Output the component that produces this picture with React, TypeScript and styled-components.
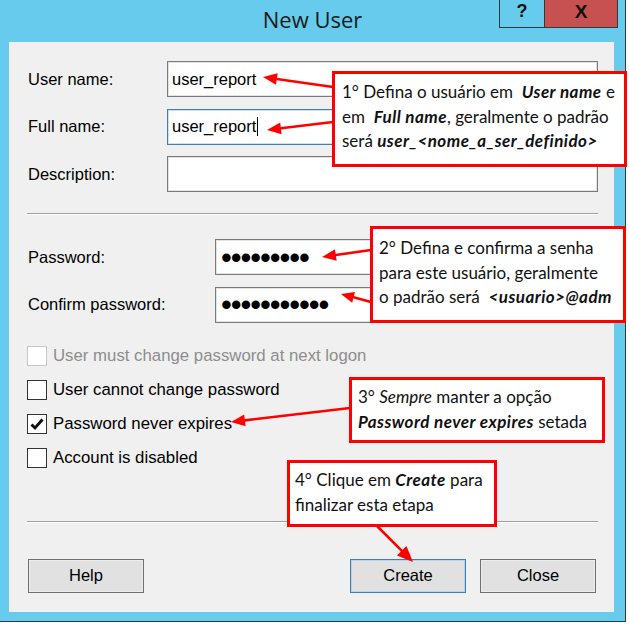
import React from "react";
import styled, { createGlobalStyle } from "styled-components";

const Global = createGlobalStyle`
  html, body { margin: 0; padding: 0; background: #ffffff; }
  body { font-family: "Liberation Sans", Arial, sans-serif; }
  * { box-sizing: border-box; }
`;

const Stage = styled.div`
  position: relative;
  width: 629px;
  height: 624px;
  overflow: hidden;
  background: #ffffff;
`;

const Window = styled.div`
  width: 626px;
  height: 622px;
  background: #66cbec;
  border-right: 1px solid #2e3b40;
  border-bottom: 1px solid #2e3b40;
  display: flex;
  flex-direction: column;
`;

const TitleBar = styled.div`
  height: 42px;
  flex: none;
  display: grid;
  grid-template-columns: 1fr auto 1fr;
`;

const Title = styled.div`
  grid-column: 2;
  font-family: "Open Sans", "Noto Sans", sans-serif;
  font-size: 22px;
  line-height: 39px;
  color: #1b1b1b;
`;

const Controls = styled.div`
  grid-column: 3;
  justify-self: end;
  align-self: start;
  margin-right: 7px;
  display: flex;
`;

const CtlButton = styled.div<{ $w: number; $bg: string }>`
  width: ${(p) => p.$w}px;
  height: 28px;
  background: ${(p) => p.$bg};
  border-left: 1px solid #333a3d;
  border-bottom: 1px solid #333a3d;
  &:last-child { border-right: 1px solid #333a3d; }
  display: flex;
  align-items: center;
  justify-content: center;
  padding-bottom: 4px;
  font-family: "Liberation Sans", Arial, sans-serif;
  font-weight: bold;
  font-size: ${(p) => (p.$w > 50 ? 19 : 18)}px;
  color: #111;
`;

const Panel = styled.div`
  flex: 1;
  margin: 0 11px 9px 9px;
  background: #f0f0f0;
  padding: 19px 16px 0 18px;
  display: flex;
  flex-direction: column;
`;

const FieldGrid = styled.div<{ $labelWidth: number; $mt?: number }>`
  display: grid;
  grid-template-columns: ${(p) => p.$labelWidth}px 1fr;
  row-gap: 11.5px;
  align-items: center;
  margin-top: ${(p) => p.$mt ?? 0}px;
`;

const Label = styled.div`
  font-size: 16.5px;
  color: #000;
  padding-left: 1px;
`;

const TextBox = styled.div<{ $focus?: boolean }>`
  height: 36px;
  background: #fff;
  border: 1px solid ${(p) => (p.$focus ? "#3c7fb1" : "#7a7a7a")};
  box-shadow: inset 0 0 0 1px ${(p) => (p.$focus ? "#cfe0ee" : "#e3e3e3")};
  display: flex;
  align-items: center;
  padding-left: 4px;
  font-size: 16.5px;
  color: #000;
`;

const Caret = styled.span`
  display: inline-block;
  width: 1px;
  height: 19px;
  background: #000;
  margin-left: 1px;
`;

const Dots = styled.span`
  font-family: "Liberation Sans", Arial, sans-serif;
  font-size: 31px;
  line-height: 30px;
  letter-spacing: -1.1px;
  padding-left: 1px;
  margin-top: 1px;
`;

const Divider = styled.div<{ $mt: number }>`
  margin-top: ${(p) => p.$mt}px;
  border-top: 1px solid #a0a0a0;
  border-bottom: 1px solid #ffffff;
`;

const CheckList = styled.div`
  margin-top: 16px;
  display: flex;
  flex-direction: column;
`;

const CheckRow = styled.div<{ $disabled?: boolean }>`
  height: 34px;
  display: flex;
  align-items: center;
  gap: 6px;
  font-size: 16.8px;
  color: ${(p) => (p.$disabled ? "#8d8d8d" : "#000")};
`;

const Box = styled.span<{ $disabled?: boolean }>`
  width: 20px;
  height: 20px;
  flex: none;
  background: #fff;
  border: 1px solid ${(p) => (p.$disabled ? "#c6c6c6" : "#333")};
  display: flex;
  align-items: center;
  justify-content: center;
`;

const ButtonRow = styled.div`
  margin-top: 36px;
  display: flex;
  justify-content: space-between;
  padding: 0 2px 0 1px;
`;

const ButtonGroup = styled.div`
  display: flex;
  gap: 14px;
`;

const Button = styled.div<{ $default?: boolean }>`
  width: 116px;
  height: 34px;
  background: #e1e1e1;
  border: 1px solid ${(p) => (p.$default ? "#3c7fb1" : "#707070")};
  box-shadow: inset 0 0 0 1px ${(p) => (p.$default ? "#b9d2e6" : "#ececec")};
  display: flex;
  align-items: center;
  justify-content: center;
  font-size: 16.5px;
  color: #000;
`;

const Overlay = styled.svg`
  position: absolute;
  left: 0;
  top: 0;
  pointer-events: none;
`;

const Callout = styled.div<{ $x: number; $y: number; $w: number; $h: number; $px: number; $py: number }>`
  position: absolute;
  left: ${(p) => p.$x}px;
  top: ${(p) => p.$y}px;
  width: ${(p) => p.$w}px;
  height: ${(p) => p.$h}px;
  border: 3px solid #ff0000;
  background: #ffffff;
  padding: ${(p) => p.$py}px ${(p) => p.$px}px;
  font-family: Lato, "Open Sans", sans-serif;
  font-size: 17px;
  line-height: 24.5px;
  color: #111;
  white-space: nowrap;
`;

const BI = styled.b`
  font-style: italic;
  font-weight: 700;
  letter-spacing: 0.45px;
`;

const I = styled.i`
  font-style: italic;
`;

const arrows = [
  { x1: 333, y1: 87, x2: 263, y2: 77, h: 14 },
  { x1: 333, y1: 122, x2: 267, y2: 130, h: 14 },
  { x1: 371, y1: 250, x2: 322, y2: 257, h: 14 },
  { x1: 371, y1: 302, x2: 341, y2: 294, h: 13 },
  { x1: 350, y1: 408, x2: 231, y2: 422, h: 14 },
  { x1: 377, y1: 526, x2: 413, y2: 562, h: 16 },
];

function Arrow({ x1, y1, x2, y2, h }: { x1: number; y1: number; x2: number; y2: number; h: number }) {
  const dx = x2 - x1;
  const dy = y2 - y1;
  const len = Math.hypot(dx, dy);
  const ux = dx / len;
  const uy = dy / len;
  const bx = x2 - ux * h;
  const by = y2 - uy * h;
  const w = h * 0.42;
  const px = -uy * w;
  const py = ux * w;
  return (
    <g>
      <line x1={x1} y1={y1} x2={bx + ux * 2} y2={by + uy * 2} stroke="#ff0000" strokeWidth={2.6} />
      <polygon points={`${x2},${y2} ${bx + px},${by + py} ${bx - px},${by - py}`} fill="#ff0000" />
    </g>
  );
}

function Check() {
  return (
    <svg width="16" height="16" viewBox="0 0 16 16">
      <path d="M2.5 8.5 L6 12 L13.5 3.5" fill="none" stroke="#111" strokeWidth="2.9" />
    </svg>
  );
}

const checks = [
  { label: "User must change password at next logon", disabled: true, checked: false },
  { label: "User cannot change password", disabled: false, checked: false },
  { label: "Password never expires", disabled: false, checked: true },
  { label: "Account is disabled", disabled: false, checked: false },
];

export default function App() {
  return (
    <Stage>
      <Global />
      <Window>
        <TitleBar>
          <Title>New User</Title>
          <Controls>
            <CtlButton $w={45} $bg="#66cbec">?</CtlButton>
            <CtlButton $w={74} $bg="#c75050">X</CtlButton>
          </Controls>
        </TitleBar>
        <Panel>
          <FieldGrid $labelWidth={140}>
            <Label>User name:</Label>
            <TextBox>user_report</TextBox>
            <Label>Full name:</Label>
            <TextBox $focus>
              user_report
              <Caret />
            </TextBox>
            <Label>Description:</Label>
            <TextBox />
          </FieldGrid>
          <Divider $mt={21} />
          <FieldGrid $labelWidth={188} $mt={24}>
            <Label>Password:</Label>
            <TextBox>
              <Dots>•••••••••</Dots>
            </TextBox>
            <Label>Confirm password:</Label>
            <TextBox>
              <Dots>•••••••••••</Dots>
            </TextBox>
          </FieldGrid>
          <CheckList>
            {checks.map((c) => (
              <CheckRow key={c.label} $disabled={c.disabled}>
                <Box $disabled={c.disabled}>{c.checked && <Check />}</Box>
                {c.label}
              </CheckRow>
            ))}
          </CheckList>
          <Divider $mt={46} />
          <ButtonRow>
            <Button>Help</Button>
            <ButtonGroup>
              <Button $default>Create</Button>
              <Button>Close</Button>
            </ButtonGroup>
          </ButtonRow>
        </Panel>
      </Window>

      <Overlay width={629} height={624} viewBox="0 0 629 624">
        {arrows.map((a, i) => (
          <Arrow key={i} {...a} />
        ))}
      </Overlay>

      <Callout $x={332} $y={71} $w={295} $h={96} $px={7} $py={6}>
        1° Defina o usuário em&nbsp; <BI>User name</BI> e
        <br />
        em&nbsp; <BI>Full name</BI>, geralmente o padrão
        <br />
        será <BI>user_&lt;nome_a_ser_definido&gt;</BI>
      </Callout>

      <Callout $x={370} $y={226} $w={256} $h={97} $px={6} $py={7}>
        2° Defina e confirma a senha
        <br />
        para este usuário, geralmente
        <br />
        o padrão será&nbsp; <BI>&lt;usuario&gt;@adm</BI>
      </Callout>

      <Callout $x={349} $y={377} $w={256} $h={66} $px={6} $py={5}>
        3° <I>Sempre</I> manter a opção
        <br />
        <BI>Password never expires</BI> setada
      </Callout>

      <Callout $x={287} $y={460} $w={210} $h={67} $px={5} $py={5}>
        4° Clique em <BI>Create</BI> para
        <br />
        finalizar esta etapa
      </Callout>
    </Stage>
  );
}
